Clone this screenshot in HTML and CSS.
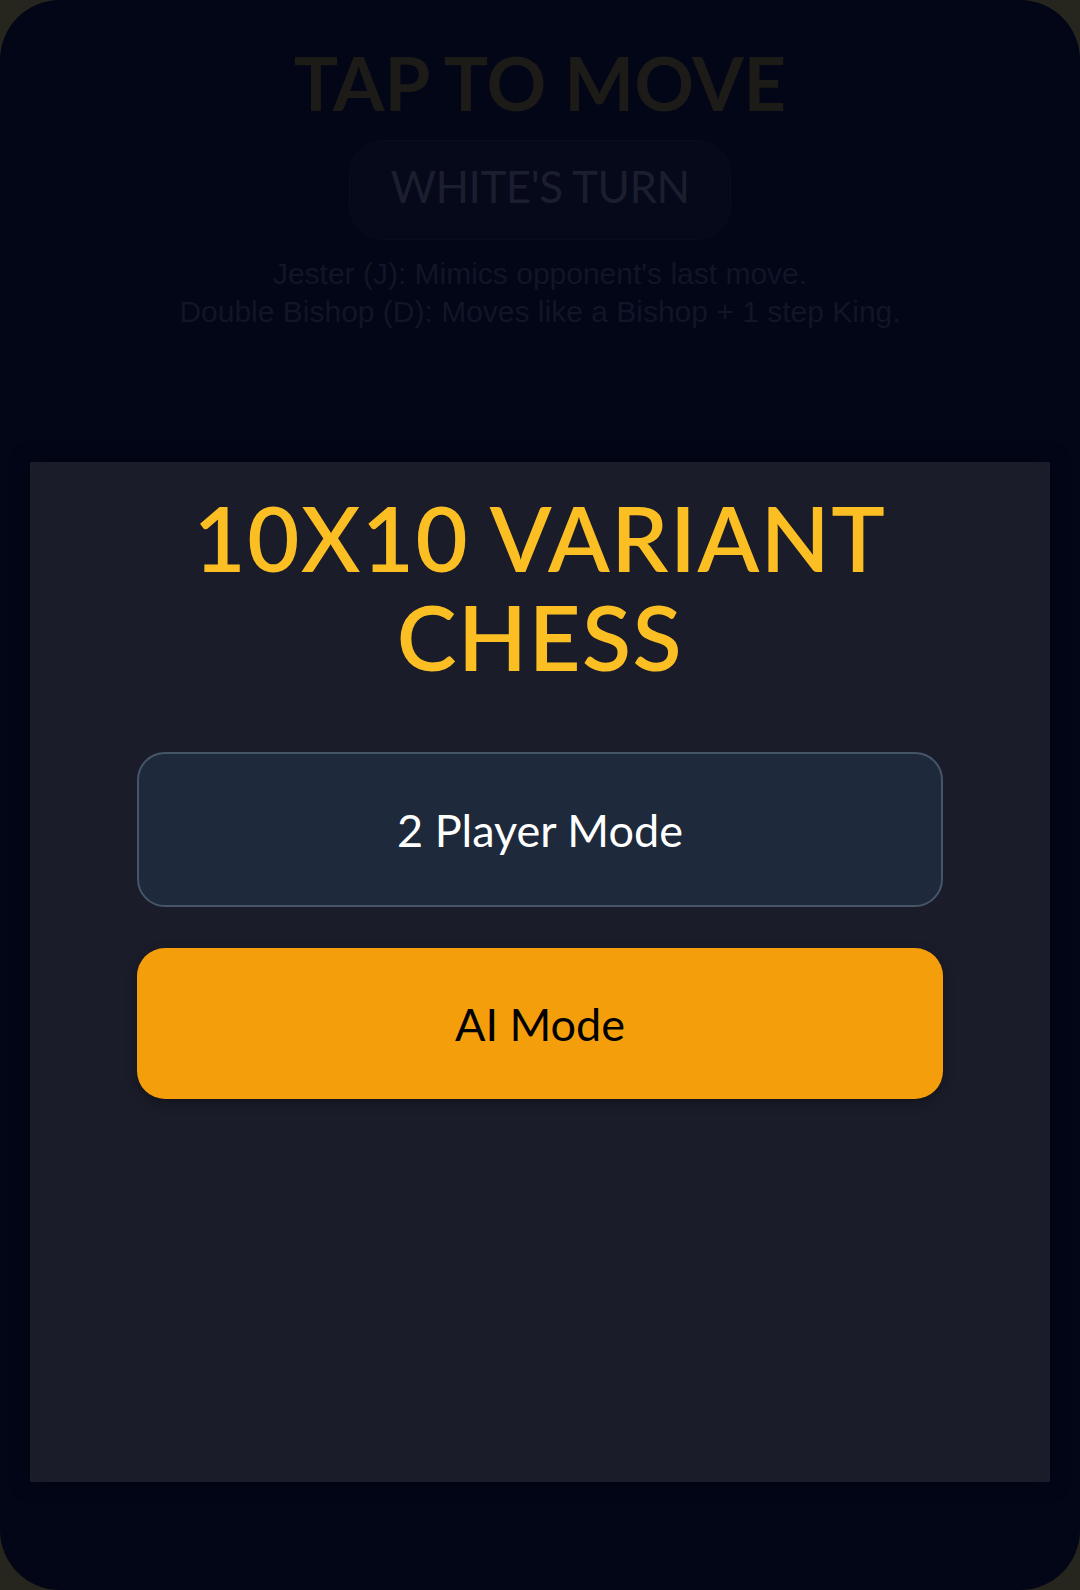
FILE: index.html
```html
<!DOCTYPE html>
<html lang="en">
<head>
<meta charset="utf-8">
<title>10x10 Variant Chess</title>
<link rel="stylesheet" href="styles.css">
</head>
<body>
<div class="app">
  <header class="status">
    <h1 class="status-title">TAP TO MOVE</h1>
    <div class="turn-pill">WHITE'S TURN</div>
    <p class="rules">Jester (J): Mimics opponent's last move.<br>Double Bishop (D): Moves like a Bishop + 1 step King.</p>
  </header>
  <section class="board-overlay">
    <h2 class="menu-title">10X10 VARIANT<br>CHESS</h2>
    <div class="menu-buttons">
      <button class="btn btn-secondary">2 Player Mode</button>
      <button class="btn btn-primary">AI Mode</button>
    </div>
  </section>
</div>
</body>
</html>
```
FILE: styles.css
```css
* { box-sizing: border-box; }
html, body { margin: 0; padding: 0; }
body {
  background: #26261f;
  font-family: Lato, "Liberation Sans", sans-serif;
}
.app {
  width: 1080px;
  height: 1590px;
  background: #020617;
  border-radius: 60px;
  overflow: hidden;
  display: flex;
  flex-direction: column;
  align-items: center;
}
.status {
  display: flex;
  flex-direction: column;
  align-items: center;
  padding-top: 46px;
}
.status-title {
  margin: 0;
  font-size: 74px;
  line-height: 1;
  font-weight: 700;
  letter-spacing: 0;
  color: #1c1b17;
}
.turn-pill {
  margin-top: 20px;
  height: 100px;
  padding: 23px 40px 31px;
  border-radius: 34px;
  background: #050919;
  border: 1px solid #080c1d;
  font-size: 44px;
  line-height: 1;
  letter-spacing: -0.5px;
  color: #1b1e2f;
}
.rules {
  margin: 15px 0 0;
  font-family: "Liberation Sans", Arial, sans-serif;
  font-size: 30px;
  line-height: 38px;
  text-align: center;
  color: #111527;
}
.board-overlay {
  margin-top: 131px;
  width: 1020px;
  height: 1020px;
  background: #1a1c29;
  box-shadow: 0 0 20px rgba(0, 0, 0, 0.35);
  display: flex;
  flex-direction: column;
  align-items: center;
  padding-top: 26px;
}
.menu-title {
  margin: 0;
  font-size: 90px;
  line-height: 99px;
  font-weight: 600;
  letter-spacing: 1.5px;
  text-align: center;
  color: #fbbf24;
}
.menu-buttons {
  margin-top: 66px;
  display: flex;
  flex-direction: column;
  gap: 41px;
}
.btn {
  width: 806px;
  border-radius: 28px;
  font-family: Lato, "Liberation Sans", sans-serif;
  font-size: 45px;
  font-weight: 400;
  cursor: pointer;
}
.btn-secondary {
  height: 155px;
  background: #1e293b;
  border: 2px solid #475569;
  color: #ffffff;
}
.btn-primary {
  height: 151px;
  background: #f59e0b;
  border: none;
  color: #000000;
  box-shadow: 0 4px 12px rgba(0, 0, 0, 0.3);
}
```
